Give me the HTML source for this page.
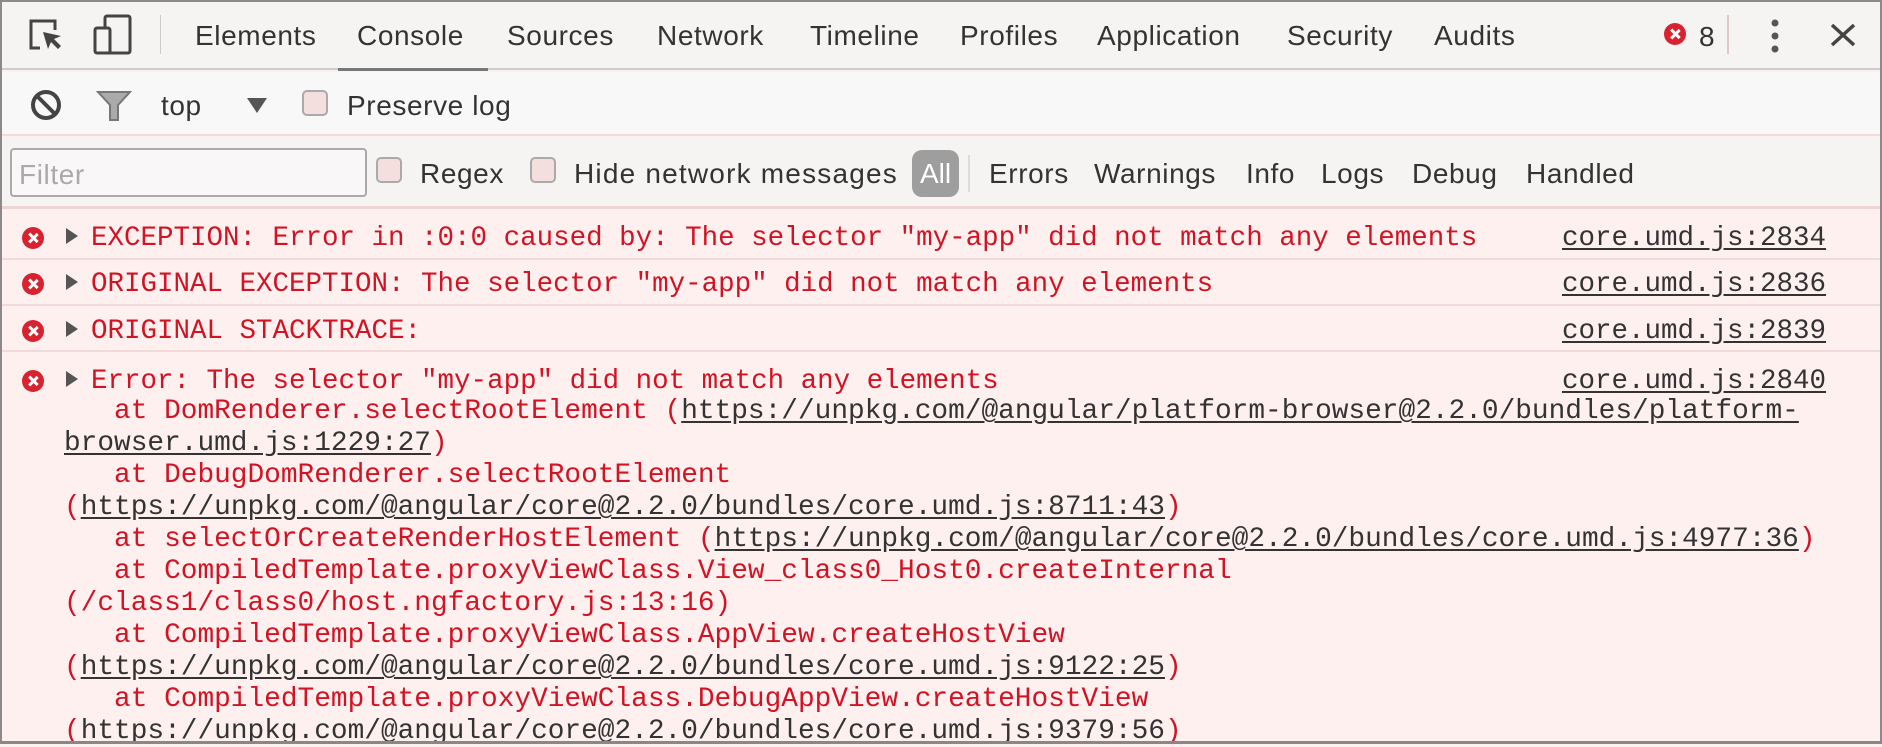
<!DOCTYPE html>
<html><head><meta charset="utf-8"><style>
*{margin:0;padding:0;box-sizing:border-box}
body{width:1882px;height:744px;overflow:hidden;background:#fff0f0;font-family:"Liberation Sans",sans-serif;position:relative}
.frame{position:absolute;inset:0;border:2px solid #8a8a8a;border-bottom:3px solid #888;pointer-events:none;z-index:10}
.bar{position:absolute;left:0;width:1882px;background:#f6f3f3}
.t{position:absolute;font-size:28px;color:#333;letter-spacing:0.6px;white-space:nowrap;line-height:1}
.m{position:absolute;font-family:"Liberation Mono",monospace;font-size:27.5px;color:#d01424;white-space:pre;line-height:1}
.s{font-size:27.8px}
.u{color:#333;text-decoration:underline;text-underline-offset:3px}
.lnk{position:absolute;left:1562px;font-family:"Liberation Mono",monospace;font-size:27.5px;color:#333;text-decoration:underline;line-height:1;text-underline-offset:3px}
.sep{position:absolute;left:0;width:1882px;height:2px;background:#f3dada}
.cb{position:absolute;width:26px;height:26px;border:2px solid #aaa;border-radius:5px;background:#f4dede}
.ei{position:absolute;width:22px;height:22px;border-radius:50%;background:#d9222f}
.ei:before,.ei:after{content:"";position:absolute;left:10px;top:5px;width:2.5px;height:12px;background:#fff;transform:rotate(45deg)}
.ei:after{transform:rotate(-45deg)}
.ar{position:absolute;width:0;height:0;border-left:12px solid #555;border-top:8px solid transparent;border-bottom:8px solid transparent}
</style></head><body>
<div class="frame"></div>
<div class="bar" style="top:0;height:70px;border-bottom:2px solid #ccc"></div>
<div class="bar" style="top:72px;height:64px;background:#f8f8f8;border-bottom:2px solid #f0dcdc"></div>
<div class="bar" style="top:137px;height:72px;border-bottom:3px solid #f0d4d4"></div>

<svg style="position:absolute;left:28px;top:18px" width="36" height="36" viewBox="0 0 36 36"><path d="M12 30H3V3h24v9" fill="none" stroke="#444" stroke-width="3"/><path d="M15 14l5 17 3-7 7 7 3-3-7-7 7-3z" fill="#444"/></svg>
<svg style="position:absolute;left:93px;top:14px" width="40" height="42" viewBox="0 0 40 42"><rect x="12" y="2" width="25" height="37" rx="2" fill="none" stroke="#444" stroke-width="3"/><rect x="2" y="14" width="15" height="25" rx="2" fill="#f6f3f3" stroke="#444" stroke-width="3"/></svg>
<div style="position:absolute;left:160px;top:15px;width:1px;height:39px;background:#ccc"></div>
<div class="t" style="left:195px;top:22px">Elements</div>
<div class="t" style="left:357px;top:22px">Console</div>
<div style="position:absolute;left:338px;top:68px;width:150px;height:3px;background:#777"></div>
<div class="t" style="left:507px;top:22px">Sources</div>
<div class="t" style="left:657px;top:22px">Network</div>
<div class="t" style="left:810px;top:22px">Timeline</div>
<div class="t" style="left:960px;top:22px">Profiles</div>
<div class="t" style="left:1097px;top:22px">Application</div>
<div class="t" style="left:1287px;top:22px">Security</div>
<div class="t" style="left:1434px;top:22px">Audits</div>
<div class="ei" style="left:1664px;top:23px"></div>
<div class="t" style="left:1699px;top:23px">8</div>
<div style="position:absolute;left:1727px;top:15px;width:2px;height:39px;background:#e0c8c8"></div>
<svg style="position:absolute;left:1770px;top:18px" width="10" height="36"><circle cx="5" cy="5" r="3.5" fill="#555"/><circle cx="5" cy="18" r="3.5" fill="#555"/><circle cx="5" cy="31" r="3.5" fill="#555"/></svg>
<svg style="position:absolute;left:1829px;top:22px" width="28" height="26"><path d="M3 3l22 20M25 3L3 23" stroke="#444" stroke-width="3.5"/></svg>

<svg style="position:absolute;left:29px;top:88px" width="34" height="34"><circle cx="17" cy="17" r="13" fill="none" stroke="#444" stroke-width="4"/><path d="M8 8l18 18" stroke="#444" stroke-width="4"/></svg>
<svg style="position:absolute;left:96px;top:90px" width="36" height="32"><path d="M2 2h32l-12 13v15h-8V15z" fill="#aaa" stroke="#777" stroke-width="2"/></svg>
<div class="t" style="left:161px;top:92px">top</div>
<svg style="position:absolute;left:246px;top:96px" width="22" height="18"><path d="M1 2h20L11 17z" fill="#555"/></svg>
<div class="cb" style="left:302px;top:90px"></div>
<div class="t" style="left:347px;top:92px">Preserve log</div>

<div style="position:absolute;left:10px;top:148px;width:357px;height:49px;border:2px solid #aaa;border-radius:4px;background:#f9f7f7"></div>
<div class="t" style="left:19px;top:161px;color:#aaa">Filter</div>
<div class="cb" style="left:376px;top:157px"></div>
<div class="t" style="left:420px;top:160px">Regex</div>
<div class="cb" style="left:530px;top:157px"></div>
<div class="t" style="left:574px;top:160px;letter-spacing:1.2px">Hide network messages</div>
<div style="position:absolute;left:912px;top:150px;width:47px;height:47px;border-radius:10px;background:#9e9e9e;color:#fff;font-size:28px;line-height:47px;text-align:center">All</div>
<div style="position:absolute;left:968px;top:155px;width:2px;height:37px;background:#ddd"></div>
<div class="t" style="left:989px;top:160px">Errors</div>
<div class="t" style="left:1094px;top:160px">Warnings</div>
<div class="t" style="left:1246px;top:160px">Info</div>
<div class="t" style="left:1321px;top:160px">Logs</div>
<div class="t" style="left:1412px;top:160px">Debug</div>
<div class="t" style="left:1526px;top:160px">Handled</div>

<div class="sep" style="top:258px"></div>
<div class="sep" style="top:304px"></div>
<div class="sep" style="top:350px"></div>

<div class="ei" style="left:22px;top:227px"></div><div class="ar" style="left:66px;top:228px"></div>
<div class="m" style="left:91px;top:225px">EXCEPTION: Error in :0:0 caused by: The selector "my-app" did not match any elements</div>
<div class="lnk" style="top:225px">core.umd.js:2834</div>

<div class="ei" style="left:22px;top:273px"></div><div class="ar" style="left:66px;top:274px"></div>
<div class="m" style="left:91px;top:271px">ORIGINAL EXCEPTION: The selector "my-app" did not match any elements</div>
<div class="lnk" style="top:271px">core.umd.js:2836</div>

<div class="ei" style="left:22px;top:320px"></div><div class="ar" style="left:66px;top:321px"></div>
<div class="m" style="left:91px;top:318px">ORIGINAL STACKTRACE:</div>
<div class="lnk" style="top:318px">core.umd.js:2839</div>

<div class="ei" style="left:22px;top:370px"></div><div class="ar" style="left:66px;top:371px"></div>
<div class="m" style="left:91px;top:368px">Error: The selector "my-app" did not match any elements</div>
<div class="lnk" style="top:368px">core.umd.js:2840</div>
<div class="m s" style="left:64px;top:398px">   at DomRenderer.selectRootElement (<span class="u">https://unpkg.com/@angular/platform-browser@2.2.0/bundles/platform-</span></div>
<div class="m s" style="left:64px;top:430px"><span class="u">browser.umd.js:1229:27</span>)</div>
<div class="m s" style="left:64px;top:462px">   at DebugDomRenderer.selectRootElement</div>
<div class="m s" style="left:64px;top:494px">(<span class="u">https://unpkg.com/@angular/core@2.2.0/bundles/core.umd.js:8711:43</span>)</div>
<div class="m s" style="left:64px;top:526px">   at selectOrCreateRenderHostElement (<span class="u">https://unpkg.com/@angular/core@2.2.0/bundles/core.umd.js:4977:36</span>)</div>
<div class="m s" style="left:64px;top:558px">   at CompiledTemplate.proxyViewClass.View_class0_Host0.createInternal</div>
<div class="m s" style="left:64px;top:590px">(/class1/class0/host.ngfactory.js:13:16)</div>
<div class="m s" style="left:64px;top:622px">   at CompiledTemplate.proxyViewClass.AppView.createHostView</div>
<div class="m s" style="left:64px;top:654px">(<span class="u">https://unpkg.com/@angular/core@2.2.0/bundles/core.umd.js:9122:25</span>)</div>
<div class="m s" style="left:64px;top:686px">   at CompiledTemplate.proxyViewClass.DebugAppView.createHostView</div>
<div class="m s" style="left:64px;top:718px">(<span class="u">https://unpkg.com/@angular/core@2.2.0/bundles/core.umd.js:9379:56</span>)</div>
</body></html>
